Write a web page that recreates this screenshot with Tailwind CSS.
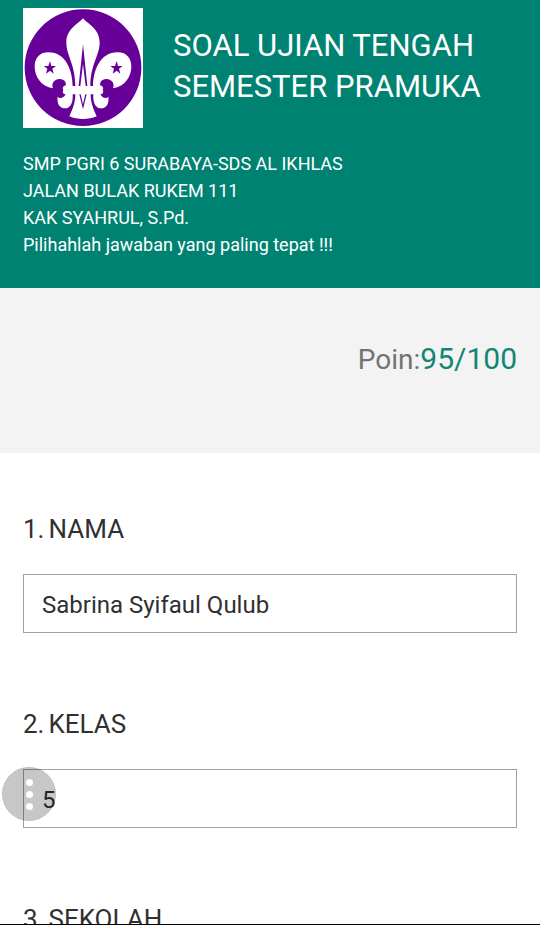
<!DOCTYPE html>
<html lang="id">
<head>
  <meta charset="UTF-8" />
  <meta name="viewport" content="width=device-width, initial-scale=1.0"/>
  <title>Soal Ujian Tengah Semester Pramuka</title>
  <script src="https://cdn.jsdelivr.net/npm/@tailwindcss/browser@4"></script>
</head>
<body class="relative flex h-screen flex-col overflow-hidden bg-white font-['Roboto',sans-serif] text-[#303030]">

  <!-- Header -->
  <header class="shrink-0 bg-[#008272] px-[23px] pt-2 pb-[30px] text-white">
    <div class="flex items-start gap-[30px]">
      <svg class="size-[120px] shrink-0" viewBox="0 0 360 360" role="img" aria-label="Logo Pramuka">
        <rect width="360" height="360" fill="#fff"/>
        <circle cx="180" cy="179" r="175" fill="#660099"/>
        <g fill="#fff">
          <!-- middle petal -->
          <path d="M180 31C170 44 130 62 130 103C130 145 157 167 157 236H202C202 167 230 145 230 103C230 62 190 44 180 31Z"/>
          <!-- side petals -->
          <path d="M149 236C149 190 130 133 76 133C48 133 35 152 35 176C35 204 53 235 90 241C84 226 94 213 110 213C125 213 133 226 126 236Z"/>
          <path d="M210 236C210 190 230 133 284 133C312 133 325 152 325 176C325 204 307 235 270 241C276 226 266 213 250 213C235 213 227 226 234 236Z"/>
          <!-- knot -->
          <path d="M130 234H230C236 231 244 238 239 246C244 254 236 261 230 259H130C124 261 116 254 121 246C116 238 124 231 130 234Z"/>
          <!-- lower curls -->
          <path d="M149 257C151 283 143 301 126 301C110 301 101 287 104 266C110 272 121 272 129 257Z"/>
          <path d="M211 257C209 283 217 301 234 301C250 301 259 287 256 266C250 272 239 272 231 257Z"/>
          <!-- foot -->
          <path d="M157 257H203C203 286 212 304 221 325C197 336 163 336 139 325C148 304 157 286 157 257Z"/>
        </g>
        <g fill="#660099">
          <path d="M81 159L85 174H99L88 182L92 197L81 188L69 197L73 182L62 174H76Z"/>
          <path d="M281 159L285 174H299L288 182L292 197L281 188L269 197L273 182L262 174H276Z"/>
          <path d="M180 108L193 234H188L180 168L172 234H167Z"/>
          <path d="M169 259L180 304L191 259H187L180 289L173 259Z"/>
        </g>
      </svg>
      <h1 class="pt-[17px] text-[31px] leading-[41px]">SOAL UJIAN TENGAH SEMESTER PRAMUKA</h1>
    </div>
    <p class="mt-[22px] text-[18px] leading-[27px]">
      SMP PGRI 6 SURABAYA-SDS AL IKHLAS<br>
      JALAN BULAK RUKEM 111<br>
      KAK SYAHRUL, S.Pd.<br>
      Pilihahlah jawaban yang paling tepat !!!
    </p>
  </header>

  <!-- Score -->
  <div class="flex h-[165px] shrink-0 items-baseline justify-end bg-[#f3f3f3] px-[23px] pt-[51px]">
    <span class="text-[28px] leading-10 text-[#737373]">Poin:</span>
    <span class="text-[30px] leading-10 text-[#118675]">95/100</span>
  </div>

  <!-- Questions -->
  <main class="flex shrink-0 flex-col gap-[76px] px-[23px] pt-[61px]">
    <div>
      <label for="nama" class="flex gap-1 text-[26px] leading-[30px]"><span>1.</span><span>NAMA</span></label>
      <input id="nama" type="text" value="Sabrina Syifaul Qulub" class="mt-[30px] block h-[59px] w-full border border-[#a0a0a0] bg-white px-[18px] pt-[3px] text-[24px]" />
    </div>
    <div>
      <label for="kelas" class="flex gap-1 text-[26px] leading-[30px]"><span>2.</span><span>KELAS</span></label>
      <div class="relative mt-[30px]">
        <input id="kelas" type="text" value="5" class="block h-[59px] w-full border border-[#a0a0a0] bg-white px-[18px] pt-[3px] text-[24px]" />
        <!-- Floating menu button -->
        <button type="button" aria-label="Menu" class="absolute -top-[2px] -left-[21px] flex size-[54px] flex-col items-center justify-center gap-[5px] rounded-full border border-black/5 bg-black/22">
          <span class="size-[7px] rounded-full bg-white"></span>
          <span class="size-[7px] rounded-full bg-white"></span>
          <span class="size-[7px] rounded-full bg-white"></span>
        </button>
      </div>
    </div>
    <div>
      <label for="sekolah" class="flex gap-1 text-[26px] leading-[30px]"><span>3.</span><span>SEKOLAH</span></label>
      <input id="sekolah" type="text" class="mt-[30px] block h-[59px] w-full border border-[#a0a0a0] bg-white px-[18px] pt-[3px] text-[24px]" />
    </div>
  </main>

  <div class="absolute inset-x-0 bottom-0 h-px bg-black"></div>
</body>
</html>
